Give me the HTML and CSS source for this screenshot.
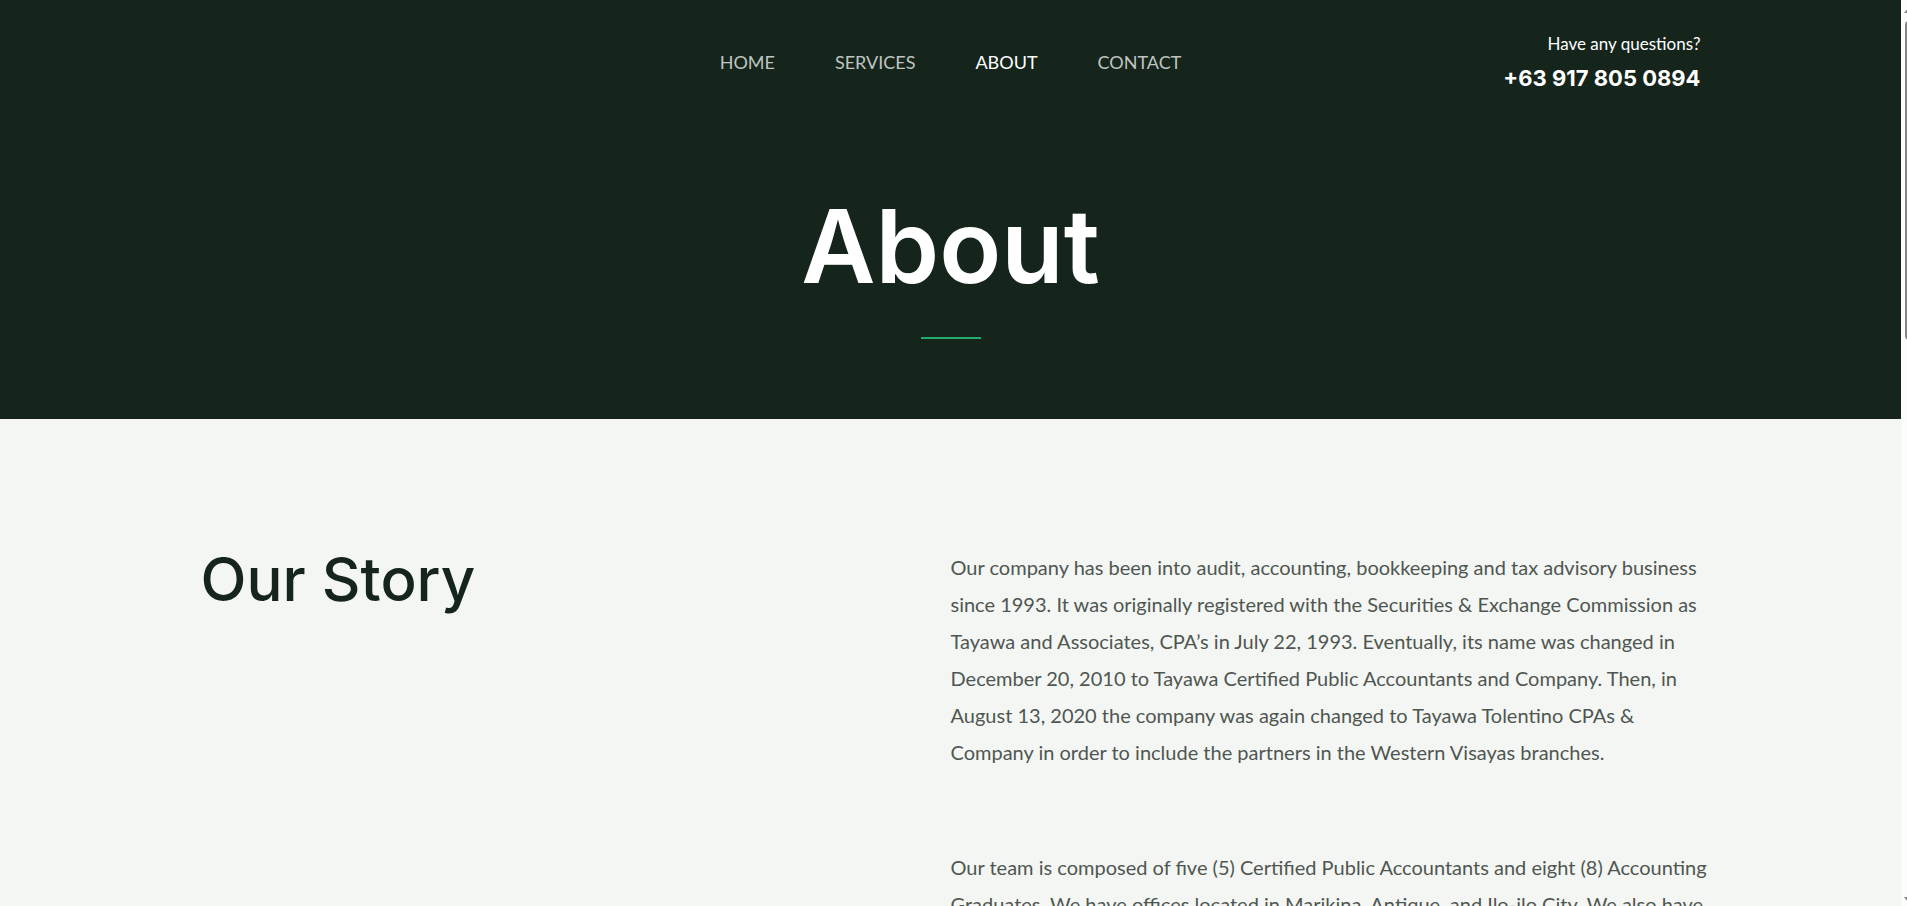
FILE: index.html
```html
<!DOCTYPE html>
<html lang="en">
<head>
<meta charset="utf-8">
<title>About</title>
<link rel="stylesheet" href="styles.css">
</head>
<body>
<div class="page">
  <header class="hero">
    <div class="container topbar">
      <nav class="menu" aria-label="Main">
        <a href="#home">HOME</a>
        <a href="#services">SERVICES</a>
        <a href="#about" class="active" aria-current="page">ABOUT</a>
        <a href="#contact">CONTACT</a>
      </nav>
      <div class="questions">
        <p class="ask">Have any questions?</p>
        <a class="phone" href="tel:+639178050894">+63 917 805 0894</a>
      </div>
    </div>
    <h1 class="title">About</h1>
    <hr class="rule">
  </header>
  <main class="container story">
    <h2 class="heading">Our Story</h2>
    <div class="copy">
      <p>Our company has been into audit, accounting, bookkeeping and tax advisory business since 1993. It was originally registered with the Securities &amp; Exchange Commission as Tayawa and Associates, CPA’s in July 22, 1993. Eventually, its name was changed in December 20, 2010 to Tayawa Certified Public Accountants and Company. Then, in August 13, 2020 the company was again changed to Tayawa Tolentino CPAs &amp; Company in order to include the partners in the Western Visayas branches.</p>
      <p>Our team is composed of five (5) Certified Public Accountants and eight (8) Accounting Graduates. We have offices located in Marikina, Antique, and Ilo-ilo City. We also have</p>
    </div>
  </main>
</div>
<div class="scrollbar" aria-hidden="true">
  <svg class="arrow" viewBox="0 0 8 5"><path d="M4 0L8 5H0Z"/></svg>
  <div class="thumb"></div>
  <svg class="arrow" viewBox="0 0 8 5"><path d="M0 0H8L4 5Z"/></svg>
</div>
</body>
</html>
```
FILE: styles.css
```css
* {
  box-sizing: border-box;
}

body {
  margin: 0;
  display: flex;
  height: 100vh;
  overflow: hidden;
  background: #f4f6f3;
  color: #4f5652;
  font-family: Lato, sans-serif;
}

h1, h2, p {
  margin: 0;
}

a {
  color: inherit;
  text-decoration: none;
}

.page {
  flex: 1;
  min-width: 0;
}

.container {
  width: 100%;
  max-width: 1500px;
  margin: 0 auto;
}

.hero {
  padding: 28px 0 80px;
  background: #15251c;
  color: #fff;
}

.topbar {
  display: grid;
  grid-template-columns: 1fr auto 1fr;
  align-items: center;
}

.menu {
  grid-column: 2;
  display: flex;
  gap: 60px;
  font-size: 18px;
  line-height: 24px;
  color: #bfc4c0;
}

.menu .active {
  color: #fff;
}

.questions {
  text-align: right;
}

.ask {
  font-size: 17px;
  line-height: 32px;
}

.phone {
  display: block;
  font: 700 22px/36px Inter, sans-serif;
}

.title {
  margin-top: 90px;
  text-align: center;
  font: 600 102px/120px Inter, sans-serif;
}

.rule {
  width: 60px;
  height: 2px;
  margin: 31px auto 0;
  border: 0;
  background: #21ab6c;
}

.story {
  display: grid;
  grid-template-columns: 1fr 1fr;
  padding-top: 130px;
}

.heading {
  color: #15251c;
  font: 500 60px/60px Inter, sans-serif;
}

.copy {
  display: grid;
  gap: 78px;
  margin-right: -20px;
  font-size: 20px;
  line-height: 37px;
}

.scrollbar {
  width: 6px;
  padding: 8px 0 4px 2px;
  display: flex;
  flex-direction: column;
  overflow: hidden;
  background: #fcfcfc;
}

.arrow {
  flex: none;
  width: 8px;
  height: 5px;
  margin-left: 1px;
  fill: #858585;
}

.thumb {
  flex: none;
  width: 8px;
  height: 319px;
  margin: 8px 0 auto 2px;
  border-radius: 4px;
  background: #858585;
}
```
